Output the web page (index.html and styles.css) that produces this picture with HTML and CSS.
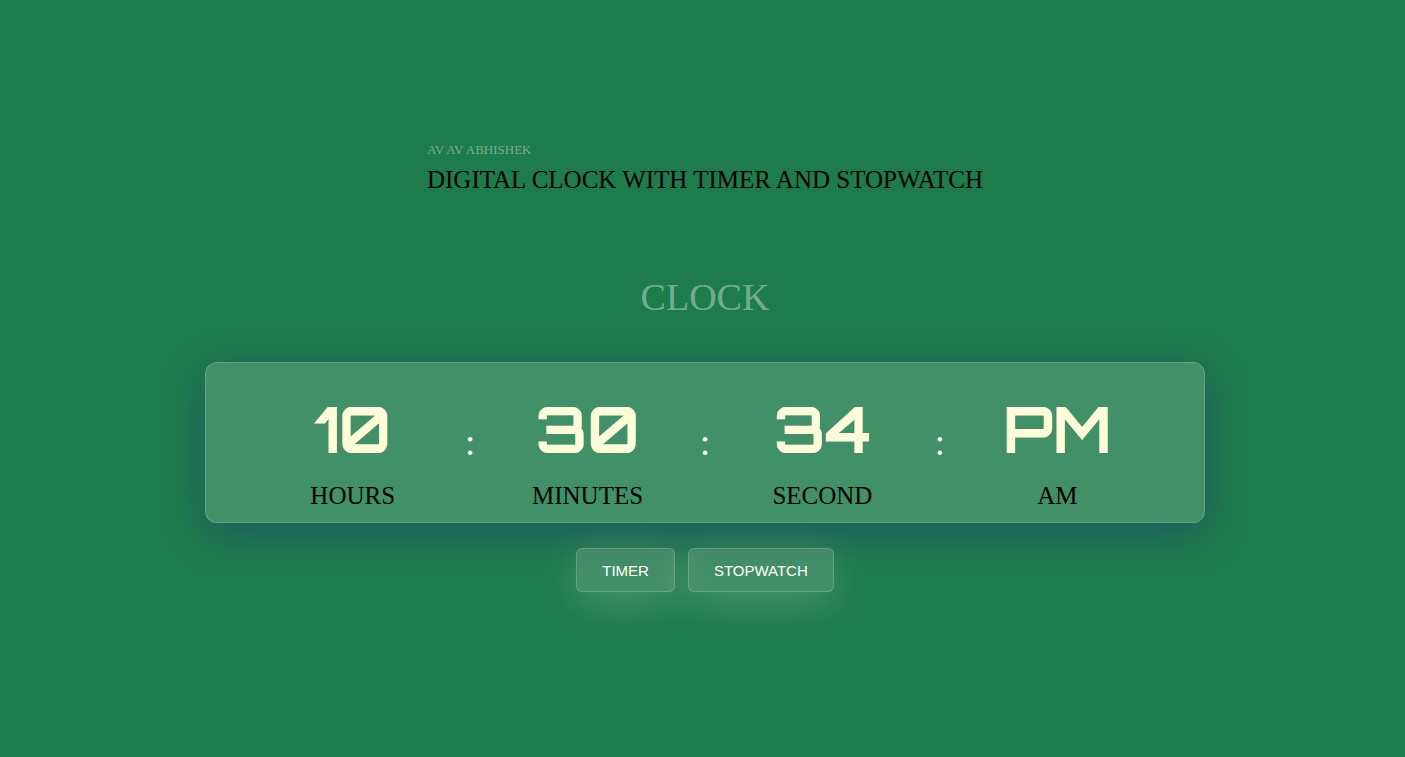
FILE: index.html
```html
<!DOCTYPE html>
<html lang="en">
<head>
<meta charset="utf-8">
<meta name="viewport" content="width=device-width, initial-scale=1">
<title>Digital Clock</title>
<link rel="stylesheet" href="styles.css">
</head>
<body>
<main class="page">
  <header class="intro">
    <p class="author">AV AV ABHISHEK</p>
    <h1 class="title">DIGITAL CLOCK WITH TIMER AND STOPWATCH</h1>
  </header>
  <h2 class="mode">CLOCK</h2>
  <section class="clock" aria-label="Clock">
    <div class="unit"><span class="value">10</span><span class="label">HOURS</span></div>
    <span class="colon">:</span>
    <div class="unit"><span class="value">30</span><span class="label">MINUTES</span></div>
    <span class="colon">:</span>
    <div class="unit"><span class="value">34</span><span class="label">SECOND</span></div>
    <span class="colon">:</span>
    <div class="unit"><span class="value">PM</span><span class="label">AM</span></div>
  </section>
  <div class="actions">
    <button class="action" type="button">TIMER</button>
    <button class="action" type="button">STOPWATCH</button>
  </div>
</main>
</body>
</html>
```

FILE: styles.css
```css
* {
  box-sizing: border-box;
  margin: 0;
}

body {
  background: #1e7b4b;
  color: #000;
  font-family: "Liberation Serif", "Times New Roman", serif;
}

.page {
  display: flex;
  flex-direction: column;
  align-items: center;
  justify-content: center;
  min-height: 100vh;
  padding: 0 0 23px 5px;
}

.author {
  color: rgba(255, 255, 255, 0.4);
  font-size: 13px;
  line-height: 16px;
}

.title {
  margin-top: 8px;
  font-size: 25px;
  font-weight: 400;
  line-height: 28px;
}

.mode {
  margin: 81px 0 43px;
  color: rgba(255, 255, 255, 0.4);
  font-size: 38px;
  font-weight: 400;
  line-height: 44px;
}

.clock {
  display: grid;
  grid-template-columns: repeat(7, minmax(0, 1fr));
  align-items: center;
  justify-items: center;
  width: 100%;
  max-width: 1000px;
  padding: 29px 88px 11px;
  background: rgba(255, 255, 255, 0.16);
  border: 1px solid rgba(255, 255, 255, 0.18);
  border-radius: 12px;
  box-shadow: 0 10px 42px rgba(31, 38, 135, 0.38);
}

.unit {
  display: flex;
  flex-direction: column;
  align-items: center;
  gap: 15px;
}

.value {
  color: #fffcd9;
  font-family: Orbitron, Inter, "DejaVu Sans", sans-serif;
  font-size: 63px;
  font-weight: 700;
  line-height: 74px;
}

.label {
  font-size: 25px;
  line-height: 30px;
}

.colon {
  padding-bottom: 19px;
  color: #fff;
  font-size: 38px;
  line-height: 44px;
}

.actions {
  display: flex;
  gap: 13px;
  margin-top: 25px;
}

.action {
  padding: 13px 25px 11px;
  background: rgba(255, 255, 255, 0.16);
  border: 1px solid rgba(255, 255, 255, 0.18);
  border-radius: 6px;
  box-shadow: 0 10px 42px rgba(255, 255, 255, 0.2);
  color: #fff;
  font-family: "Liberation Sans", Arial, sans-serif;
  font-size: 15px;
  line-height: 18px;
}
```
